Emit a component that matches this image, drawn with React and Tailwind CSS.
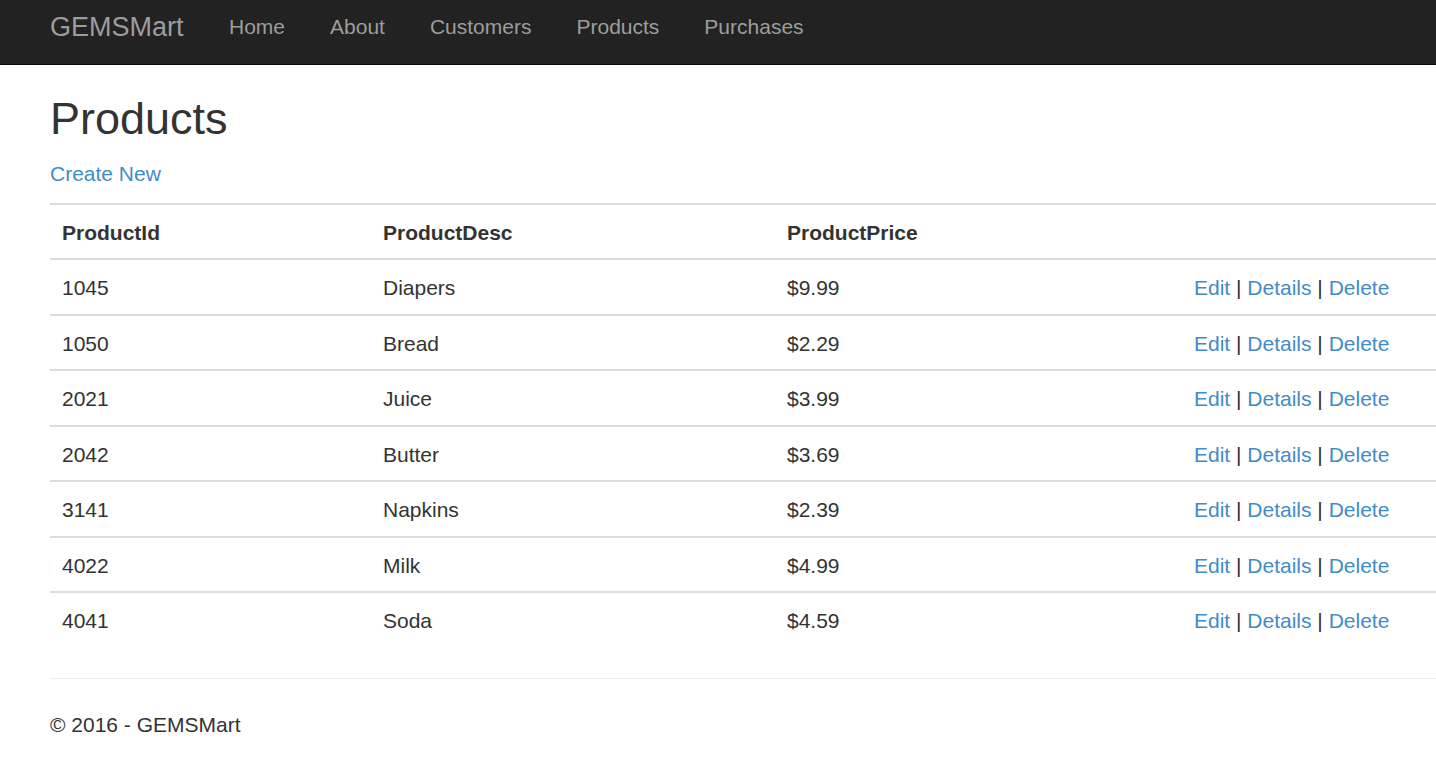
const products = [
	{ id: 1045, desc: "Diapers", price: "$9.99" },
	{ id: 1050, desc: "Bread", price: "$2.29" },
	{ id: 2021, desc: "Juice", price: "$3.99" },
	{ id: 2042, desc: "Butter", price: "$3.69" },
	{ id: 3141, desc: "Napkins", price: "$2.39" },
	{ id: 4022, desc: "Milk", price: "$4.99" },
	{ id: 4041, desc: "Soda", price: "$4.59" },
];

const navLinks = ["Home", "About", "Customers", "Products", "Purchases"];

export default function App() {
	const cell = "border-t-2 border-[#dddddd] px-[12px] pt-[13.25px] pb-[10.25px] leading-[30px] align-top";

	return (
		<div
			className="min-h-screen w-full overflow-hidden bg-white text-[#333333] text-[21px]"
			style={{ fontFamily: '"Liberation Sans", Arial, sans-serif' }}
		>
			{/* Navbar */}
			<nav className="h-[65px] bg-[#222222] border-b border-[#080808]">
				<div className="flex items-start pl-[50px] pt-[12px]">
					<a className="text-[27px] leading-[30px] text-[#9d9d9d] mr-[23px]">
						GEMSMart
					</a>
					<ul className="flex">
						{navLinks.map((link) => (
							<li key={link}>
								<a className="block px-[22.5px] leading-[30px] text-[21px] text-[#9d9d9d]">
									{link}
								</a>
							</li>
						))}
					</ul>
				</div>
			</nav>

			{/* Body content */}
			<div className="pl-[50px]">
				<div className="w-[1450px]">
					<h2 className="mt-[29px] mb-[15px] text-[45px] leading-[49.5px] font-normal">
						Products
					</h2>
					<p className="mb-[14px] leading-[30px]">
						<a className="text-[#428bca]">Create New</a>
					</p>

					<table className="w-full border-collapse">
						<tbody>
							<tr>
								<th className={`${cell} text-left font-bold w-[321px]`}>ProductId</th>
								<th className={`${cell} text-left font-bold w-[404px]`}>ProductDesc</th>
								<th className={`${cell} text-left font-bold w-[407px]`}>ProductPrice</th>
								<th className={`${cell}`}></th>
							</tr>
							{products.map((p) => (
								<tr key={p.id}>
									<td className={cell}>{p.id}</td>
									<td className={cell}>{p.desc}</td>
									<td className={cell}>{p.price}</td>
									<td className={cell}>
										<a className="text-[#428bca]">Edit</a> |{" "}
										<a className="text-[#428bca]">Details</a> |{" "}
										<a className="text-[#428bca]">Delete</a>
									</td>
								</tr>
							))}
						</tbody>
					</table>

					<hr className="mt-[31px] mb-[31px] border-0 border-t-[1.5px] border-[#eeeeee]" />
					<footer>
						<p className="leading-[30px]">© 2016 - GEMSMart</p>
					</footer>
				</div>
			</div>
		</div>
	);
}
